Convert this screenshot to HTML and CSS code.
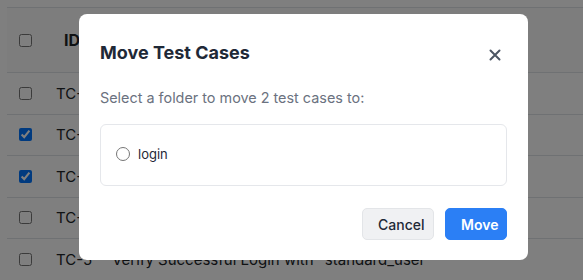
FILE: index.html
```html
<!DOCTYPE html>
<html lang="en">
<head>
<meta charset="utf-8">
<title>Move Test Cases</title>
<link rel="stylesheet" href="styles.css">
</head>
<body>
<div class="page">
  <div class="table">
    <div class="row head">
      <div class="cell check"><input type="checkbox"></div>
      <div class="cell id">ID</div>
      <div class="cell title"></div>
    </div>
    <div class="row">
      <div class="cell check"><input type="checkbox"></div>
      <div class="cell id">TC-1</div>
      <div class="cell title">Verify Login Page Loads</div>
    </div>
    <div class="row">
      <div class="cell check"><input type="checkbox" checked></div>
      <div class="cell id">TC-2</div>
      <div class="cell title">Verify Login with Invalid Credentials</div>
    </div>
    <div class="row">
      <div class="cell check"><input type="checkbox" checked></div>
      <div class="cell id">TC-3</div>
      <div class="cell title">Verify Locked Out User</div>
    </div>
    <div class="row">
      <div class="cell check"><input type="checkbox"></div>
      <div class="cell id">TC-4</div>
      <div class="cell title">Verify Empty Fields Validation</div>
    </div>
    <div class="row">
      <div class="cell check"><input type="checkbox"></div>
      <div class="cell id">TC-5</div>
      <div class="cell title">Verify Successful Login with "standard_user"</div>
    </div>
  </div>
</div>
<div class="overlay">
  <div class="modal">
    <div class="modal-header">
      <h2 class="modal-title">Move Test Cases</h2>
      <button class="close" aria-label="Close">
        <svg width="12" height="12" viewBox="0 0 12 12"><path d="M1.5 1.5 L10.5 10.5 M10.5 1.5 L1.5 10.5" stroke="#4b5563" stroke-width="2" stroke-linecap="round"/></svg>
      </button>
    </div>
    <p class="modal-text">Select a folder to move 2 test cases to:</p>
    <div class="folders">
      <label class="folder"><input type="radio" name="folder"><span>login</span></label>
    </div>
    <div class="actions">
      <button class="btn btn-cancel">Cancel</button>
      <button class="btn btn-move">Move</button>
    </div>
  </div>
</div>
</body>
</html>
```
FILE: styles.css
```css
* { box-sizing: border-box; }
html, body { margin: 0; padding: 0; }
body {
  width: 583px;
  height: 280px;
  overflow: hidden;
  font-family: Inter, "Liberation Sans", sans-serif;
  background: #ffffff;
  color: #212529;
}
.page {
  padding: 7px 0 0 7px;
}
.table {
  border-top: 1px solid #dee2e6;
}
.row {
  display: flex;
  height: 41.5px;
  align-items: center;
  border-bottom: 1px solid #dee2e6;
}
.row.head {
  height: 65px;
  background: #fbfbfb;
}
.cell.check {
  width: 36px;
  display: flex;
  justify-content: center;
}
.cell.check input {
  width: 13px;
  height: 13px;
  margin: 0;
}
.cell.id {
  width: 56px;
  padding-left: 13px;
  font-size: 15px;
  white-space: nowrap;
}
.row.head .cell.id {
  padding-left: 21px;
  font-weight: 700;
  font-size: 16px;
}
.cell.title {
  font-size: 15px;
  white-space: nowrap;
  padding-left: 13px;
}
.overlay {
  position: fixed;
  inset: 0;
  background: rgba(0, 0, 0, 0.5);
  display: flex;
  align-items: flex-start;
  padding: 14px 0 0 79px;
}
.modal {
  width: 449px;
  height: 246px;
  background: #ffffff;
  border-radius: 8px;
  padding: 25px 21px 20px 21px;
  display: flex;
  flex-direction: column;
}
.modal-header {
  display: flex;
  align-items: center;
  justify-content: space-between;
  height: 28px;
}
.modal-title {
  margin: 0;
  font-size: 18px;
  line-height: 28px;
  font-weight: 700;
  color: #1f2937;
}
.close {
  border: 0;
  background: none;
  padding: 0;
  width: 12px;
  height: 12px;
  margin-right: 6px;
  margin-top: 3px;
  display: flex;
}
.modal-text {
  margin: 21px 0 0 0;
  font-size: 14.4px;
  line-height: 20px;
  color: #6b7280;
}
.folders {
  margin-top: 16px;
  height: 62px;
  border: 1px solid #e5e7eb;
  border-radius: 6px;
  display: flex;
  align-items: center;
  padding: 0 15px;
}
.folder {
  display: flex;
  align-items: center;
  gap: 8px;
  font-size: 13px;
  color: #1f2937;
  margin-top: -2px;
}
.folder input {
  width: 14px;
  height: 14px;
  margin: 0;
}
.actions {
  margin-top: 22px;
  display: flex;
  justify-content: flex-end;
  gap: 11px;
}
.btn {
  height: 32px;
  border-radius: 5px;
  font-family: Inter, "Liberation Sans", sans-serif;
  font-size: 14px;
  font-weight: 500;
  padding: 0 15px;
}
.btn-cancel {
  width: 72px;
  background: #f0f1f3;
  border: 1px solid #e3e5e8;
  color: #1f2937;
}
.btn-move {
  width: 62px;
  background: #2b7ff5;
  border: 1px solid #2b7ff5;
  color: #ffffff;
  font-weight: 600;
}
```
